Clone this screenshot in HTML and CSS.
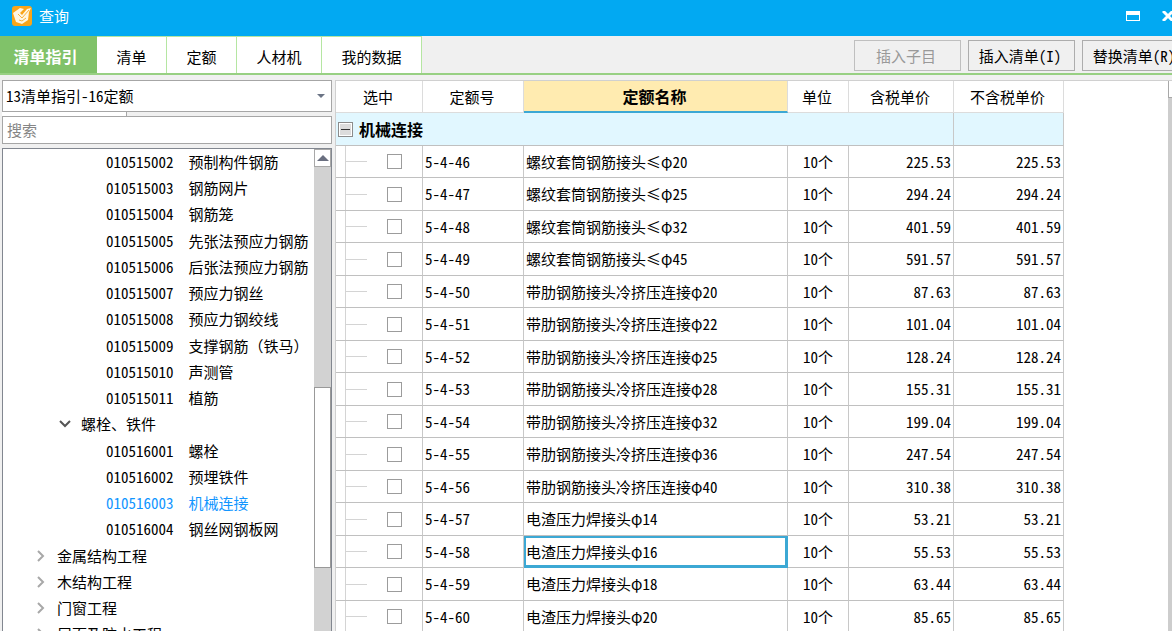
FILE: index.html
```html
<!DOCTYPE html>
<html lang="zh-CN">
<head>
<meta charset="utf-8">
<title>查询</title>
<link rel="stylesheet" href="styles.css">
</head>
<body>
<header class="titlebar">
  <svg class="logo" viewBox="0 0 20 20" aria-hidden="true">
    <rect width="20" height="20" rx="3" fill="#f9a51a"/>
    <path d="M1 7 8 2l4 1-4 4 2 2 5-6 4-1-2 4-1 8-6 4-6-2z" fill="#fff6e2"/>
    <path d="M6 8l4 4 7-8M7 14l3 1 4-3" fill="none" stroke="#f9b23c" stroke-width="1"/>
  </svg>
  <h1 class="title">查询</h1>
  <div class="controls">
    <button class="control" type="button" aria-label="最大化"><svg width="14" height="10" viewBox="0 0 14 10"><path d="M0 0h14v10H0zM1 4v5h12V4z" fill="#fff" fill-rule="evenodd"/></svg></button>
    <button class="control" type="button" aria-label="关闭"><svg width="12" height="10" viewBox="0 0 12 10"><path d="M1 0l10 10M11 0L1 10" stroke="#fff" stroke-width="3"/></svg></button>
  </div>
</header>
<nav class="toolbar">
  <button class="tab tab-active" type="button">清单指引</button>
  <button class="tab" type="button">清单</button>
  <button class="tab" type="button">定额</button>
  <button class="tab" type="button">人材机</button>
  <button class="tab tab-wide" type="button">我的数据</button>
  <div class="actions">
    <button class="action" type="button" disabled>插入子目</button>
    <button class="action" type="button">插入清单(I)</button>
    <button class="action" type="button">替换清单(R)</button>
  </div>
</nav>
<main class="main">
  <aside class="side">
    <div class="combo">
      <select class="combo-select" aria-label="清单库"><option>13清单指引-16定额</option></select>
      <svg class="combo-arrow" width="8" height="4" viewBox="0 0 8 4"><path d="M0 0h8L4 4z" fill="#6b7485"/></svg>
    </div>
    <div class="strip"></div>
    <input class="search" type="text" placeholder="搜索" aria-label="搜索">
    <div class="treebox">
      <ul class="tree">
        <li class="leaf"><span>010515002</span><span>预制构件钢筋</span></li>
        <li class="leaf"><span>010515003</span><span>钢筋网片</span></li>
        <li class="leaf"><span>010515004</span><span>钢筋笼</span></li>
        <li class="leaf"><span>010515005</span><span>先张法预应力钢筋</span></li>
        <li class="leaf"><span>010515006</span><span>后张法预应力钢筋</span></li>
        <li class="leaf"><span>010515007</span><span>预应力钢丝</span></li>
        <li class="leaf"><span>010515008</span><span>预应力钢绞线</span></li>
        <li class="leaf"><span>010515009</span><span class="full-width">支撑钢筋（铁马）</span></li>
        <li class="leaf"><span>010515010</span><span>声测管</span></li>
        <li class="leaf"><span>010515011</span><span>植筋</span></li>
        <li class="branch branch-inner"><button class="twist" type="button" aria-label="折叠"><svg width="12" height="8" viewBox="0 0 12 8"><path d="M1 1l5 5 5-5" fill="none" stroke="#555" stroke-width="2"/></svg></button><span>螺栓、铁件</span></li>
        <li class="leaf"><span>010516001</span><span>螺栓</span></li>
        <li class="leaf"><span>010516002</span><span>预埋铁件</span></li>
        <li class="leaf leaf-selected"><span>010516003</span><span>机械连接</span></li>
        <li class="leaf"><span>010516004</span><span>钢丝网钢板网</span></li>
        <li class="branch"><button class="twist" type="button" aria-label="展开"><svg width="8" height="12" viewBox="0 0 8 12"><path d="M1 1l5 5-5 5" fill="none" stroke="#a8a8a8" stroke-width="2"/></svg></button><span>金属结构工程</span></li>
        <li class="branch"><button class="twist" type="button" aria-label="展开"><svg width="8" height="12" viewBox="0 0 8 12"><path d="M1 1l5 5-5 5" fill="none" stroke="#a8a8a8" stroke-width="2"/></svg></button><span>木结构工程</span></li>
        <li class="branch"><button class="twist" type="button" aria-label="展开"><svg width="8" height="12" viewBox="0 0 8 12"><path d="M1 1l5 5-5 5" fill="none" stroke="#a8a8a8" stroke-width="2"/></svg></button><span>门窗工程</span></li>
        <li class="branch"><button class="twist" type="button" aria-label="展开"><svg width="8" height="12" viewBox="0 0 8 12"><path d="M1 1l5 5-5 5" fill="none" stroke="#a8a8a8" stroke-width="2"/></svg></button><span>屋面及防水工程</span></li>
      </ul>
      <div class="scroll">
        <button class="scroll-up" type="button" aria-label="向上滚动"><svg width="12" height="6" viewBox="0 0 12 6"><path d="M6 0l6 6H0z" fill="#6a6f80"/></svg></button>
        <div class="track-before"></div>
        <div class="thumb"></div>
        <div class="track-after"></div>
      </div>
    </div>
  </aside>
  <section class="content">
    <table class="grid">
      <colgroup><col class="c-check"><col class="c-code"><col class="c-name"><col class="c-unit"><col class="c-taxed"><col class="c-net"></colgroup>
      <thead>
        <tr><th>选中</th><th>定额号</th><th class="sorted">定额名称</th><th>单位</th><th>含税单价</th><th>不含税单价</th></tr>
      </thead>
      <tbody>
        <tr class="group"><td colspan="5"><div class="group-title"><button class="fold" type="button" aria-label="折叠"></button><span>机械连接</span></div></td><td></td></tr>
        <tr><td><label class="pick"><input type="checkbox" aria-label="5-4-46"></label></td><td>5-4-46</td><td>螺纹套筒钢筋接头≤φ20</td><td>10个</td><td>225.53</td><td>225.53</td></tr>
        <tr><td><label class="pick"><input type="checkbox" aria-label="5-4-47"></label></td><td>5-4-47</td><td>螺纹套筒钢筋接头≤φ25</td><td>10个</td><td>294.24</td><td>294.24</td></tr>
        <tr><td><label class="pick"><input type="checkbox" aria-label="5-4-48"></label></td><td>5-4-48</td><td>螺纹套筒钢筋接头≤φ32</td><td>10个</td><td>401.59</td><td>401.59</td></tr>
        <tr><td><label class="pick"><input type="checkbox" aria-label="5-4-49"></label></td><td>5-4-49</td><td>螺纹套筒钢筋接头≤φ45</td><td>10个</td><td>591.57</td><td>591.57</td></tr>
        <tr><td><label class="pick"><input type="checkbox" aria-label="5-4-50"></label></td><td>5-4-50</td><td>带肋钢筋接头冷挤压连接φ20</td><td>10个</td><td>87.63</td><td>87.63</td></tr>
        <tr><td><label class="pick"><input type="checkbox" aria-label="5-4-51"></label></td><td>5-4-51</td><td>带肋钢筋接头冷挤压连接φ22</td><td>10个</td><td>101.04</td><td>101.04</td></tr>
        <tr><td><label class="pick"><input type="checkbox" aria-label="5-4-52"></label></td><td>5-4-52</td><td>带肋钢筋接头冷挤压连接φ25</td><td>10个</td><td>128.24</td><td>128.24</td></tr>
        <tr><td><label class="pick"><input type="checkbox" aria-label="5-4-53"></label></td><td>5-4-53</td><td>带肋钢筋接头冷挤压连接φ28</td><td>10个</td><td>155.31</td><td>155.31</td></tr>
        <tr><td><label class="pick"><input type="checkbox" aria-label="5-4-54"></label></td><td>5-4-54</td><td>带肋钢筋接头冷挤压连接φ32</td><td>10个</td><td>199.04</td><td>199.04</td></tr>
        <tr><td><label class="pick"><input type="checkbox" aria-label="5-4-55"></label></td><td>5-4-55</td><td>带肋钢筋接头冷挤压连接φ36</td><td>10个</td><td>247.54</td><td>247.54</td></tr>
        <tr><td><label class="pick"><input type="checkbox" aria-label="5-4-56"></label></td><td>5-4-56</td><td>带肋钢筋接头冷挤压连接φ40</td><td>10个</td><td>310.38</td><td>310.38</td></tr>
        <tr><td><label class="pick"><input type="checkbox" aria-label="5-4-57"></label></td><td>5-4-57</td><td>电渣压力焊接头φ14</td><td>10个</td><td>53.21</td><td>53.21</td></tr>
        <tr><td><label class="pick"><input type="checkbox" aria-label="5-4-58"></label></td><td>5-4-58</td><td class="focused">电渣压力焊接头φ16</td><td>10个</td><td>55.53</td><td>55.53</td></tr>
        <tr><td><label class="pick"><input type="checkbox" aria-label="5-4-59"></label></td><td>5-4-59</td><td>电渣压力焊接头φ18</td><td>10个</td><td>63.44</td><td>63.44</td></tr>
        <tr><td><label class="pick"><input type="checkbox" aria-label="5-4-60"></label></td><td>5-4-60</td><td>电渣压力焊接头φ20</td><td>10个</td><td>85.65</td><td>85.65</td></tr>
      </tbody>
    </table>
    <div class="edge-scroll"><button class="edge-up" type="button" aria-label="向上滚动"></button></div>
  </section>
</main>
</body>
</html>
```

FILE: styles.css
```css
* { box-sizing: border-box; }

body {
  margin: 0;
  height: 100vh;
  overflow: hidden;
  display: flex;
  flex-direction: column;
  background: #f0f0f0;
  color: #000;
  font: 15px/20px "Noto Sans CJK SC", sans-serif;
  font-feature-settings: "hwid";
}

button, input, select {
  font: inherit;
  font-feature-settings: inherit;
  color: inherit;
  margin: 0;
  padding: 0;
  border: 0;
  border-radius: 0;
  background: none;
}

.titlebar {
  flex: none;
  height: 36px;
  display: flex;
  align-items: center;
  padding: 0 0 4px 12px;
  background: #02a9f2;
  color: #fff;
}
.logo { width: 20px; height: 20px; }
.title { margin: 0 0 0 7px; font-size: 15px; font-weight: 400; }
.controls { margin-left: auto; margin-right: -2px; display: flex; gap: 22px; }
.control { display: flex; }

.toolbar {
  flex: none;
  height: 39px;
  display: flex;
  border-bottom: 2px solid #98d083;
}
.tab {
  flex: none;
  width: 70px;
  padding-top: 4px;
  background: #fff;
  border-top: 1px solid #b5e6a2;
  border-right: 1px solid #b5e6a2;
  white-space: nowrap;
}
.tab:nth-child(4) { width: 85px; }
.tab.tab-wide { width: 100px; }
.tab.tab-active { width: 97px; padding: 2px 5px 0 0; background: #80c269; border-color: #80c269; color: #fff; font-size: 16px; font-weight: 700; }
.actions { margin: 4px -17px 0 auto; display: flex; align-items: flex-start; gap: 7px; }
.action { flex: none; width: 107px; height: 31px; padding-right: 3px; border: 1px solid #adadad; white-space: nowrap; }
.action:disabled { color: #999; border-color: #bfbfbf; }

.main { flex: 1; min-height: 0; display: flex; padding-top: 5px; }

.side { flex: none; width: 332px; padding-left: 2px; display: flex; flex-direction: column; }
.combo { flex: none; height: 32px; display: grid; align-items: center; background: #fff; border: 1px solid #a6a6a6; }
.combo-select { grid-area: 1 / 1; width: 100%; height: 30px; padding-left: 3px; appearance: none; }
.combo-arrow { grid-area: 1 / 1; justify-self: end; margin-right: 6px; pointer-events: none; }
.strip { flex: none; width: 125px; height: 4px; background: #fff; border-right: 1px solid #a6a6a6; }
.search { flex: none; height: 28px; padding: 0 4px 2px; background: #fff; border: 1px solid #a6a6a6; }
.search::placeholder { color: #858585; opacity: 1; }

.treebox { flex: 1; min-height: 0; margin-top: 4px; display: flex; overflow: hidden; background: #fff; border: 1px solid #828790; border-bottom: 0; }
.tree { flex: 1; min-width: 0; margin: 0; padding: 0; list-style: none; white-space: nowrap; overflow: hidden; }
.leaf, .branch { height: 26px; display: flex; align-items: center; }
.tree > :nth-child(4n) { height: 27px; }
.leaf { padding-left: 103px; gap: 15px; }
.leaf-selected { color: #1296ff; }
.full-width { font-feature-settings: normal; }
.branch { padding-left: 32px; gap: 10px; }
.branch-inner { padding-left: 56px; }
.twist { flex: none; width: 12px; display: flex; justify-content: center; }

.scroll { flex: none; width: 17px; display: flex; flex-direction: column; background: #d2d2d2; }
.scroll-up { flex: none; height: 18px; display: flex; align-items: center; justify-content: center; background: #fff; border: 1px solid #a8a8a8; }
.thumb { flex: 180; background: #fff; border: 1px solid #999; }
.track-before { flex: 221; }
.track-after { flex: 63; }

.content { flex: 1; min-width: 0; margin-left: 3px; display: flex; justify-content: space-between; overflow: hidden; background: #fff; border-top: 1px solid #d0d0d0; border-left: 1px solid #d0d0d0; }
.grid { flex: none; align-self: flex-start; width: 728px; table-layout: fixed; border-collapse: separate; border-spacing: 0; }
.c-check { width: 87px; }
.c-code { width: 101px; }
.c-name { width: 264px; }
.c-unit { width: 61px; }
.c-taxed { width: 105px; }
.c-net { width: 110px; }
.grid th, .grid td { height: 32px; padding: 0 2px; border-right: 1px solid #c8c8c8; border-bottom: 1px solid #c0c0c0; white-space: nowrap; text-align: left; }
.grid th { padding: 0 4px 0 2px; font-weight: 400; text-align: center; border-color: #dcdcdc; }
.grid th.sorted { background: #ffebb0; border-bottom: 2px solid #3ca8d4; font-size: 16px; font-weight: 700; }
.grid tbody tr:nth-child(odd) td { height: 33px; }
.grid td:nth-child(4) { text-align: center; }
.grid td:nth-child(n+5) { text-align: right; }
.grid td:first-child { padding: 0; }
.grid .group td { background: #e1f7ff; }
.group-title { display: flex; align-items: center; gap: 6px; padding-left: 2px; font-size: 16px; font-weight: 700; }
.fold { width: 15px; height: 15px; border: 1px solid #8c8c8c; background: linear-gradient(#333, #333) center / 9px 1px no-repeat, #dcdcdc; box-shadow: inset 0 0 0 1px #fff; }
.pick { height: 100%; margin-left: 9px; padding-left: 41px; display: flex; align-items: center; border-left: 1px solid #d4d4d4; background: linear-gradient(#d4d4d4, #d4d4d4) 0 50% / 21px 1px no-repeat; }
.pick input { width: 15px; height: 15px; appearance: none; background: #fff; border: 1px solid #9c9c9c; }
.grid td.focused { box-shadow: inset 0 0 0 2px #3ca8d4; border-color: #3ca8d4; }

.edge-scroll { flex: none; width: 4px; background: #cdcdcd; }
.edge-up { width: 4px; height: 17px; display: block; background: #fff; border-left: 1px solid #a8a8a8; border-bottom: 1px solid #a8a8a8; }
```
